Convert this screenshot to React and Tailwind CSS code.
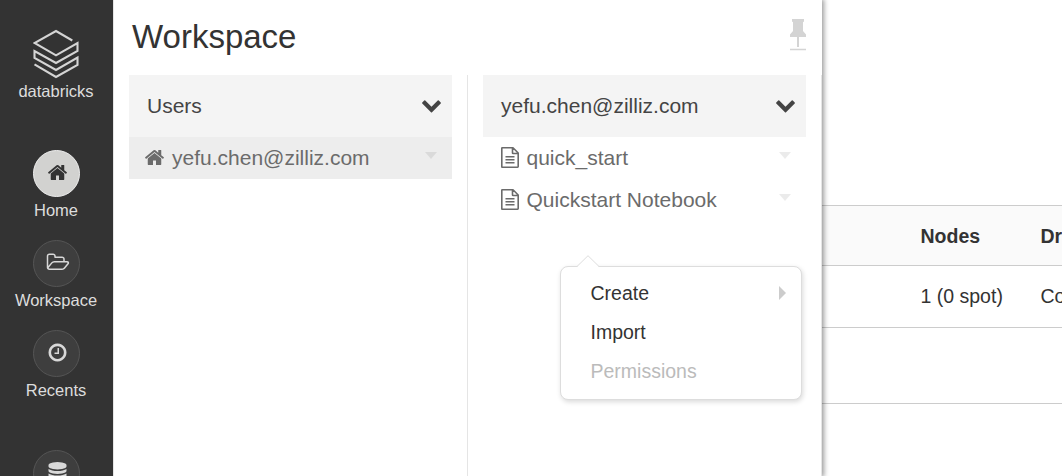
const HOME = "M1472 992v480q0 26-19 45t-45 19h-384v-384h-256v384h-384q-26 0-45-19t-19-45v-480q0-1 .5-3t.5-3l575-474 575 474q1 2 1 6zm223-69l-62 74q-8 9-21 11h-3q-13 0-21-7l-692-577-692 577q-12 8-24 7-13-2-21-11l-62-74q-8-10-7-23.5t11-21.5l719-599q32-26 76-26t76 26l244 204v-195q0-14 9-23t23-9h192q14 0 23 9t9 23v408l219 182q10 8 11 21.5t-7 23.5z";
const FOLDER = "M1845 931q0-35-53-35h-1088q-40 0-85.5 21.5t-71.5 52.5l-294 363q-18 24-18 40 0 35 53 35h1088q40 0 86-22t71-53l294-363q18-22 18-39zm-1141-163h768v-160q0-40-28-68t-68-28h-576q-40 0-68-28t-28-68v-64q0-40-28-68t-68-28h-320q-40 0-68 28t-28 68v853l256-315q44-53 116-87.5t140-34.5zm1269 163q0 62-46 120l-295 363q-43 53-116 87.5t-140 34.5h-1088q-92 0-158-66t-66-158v-960q0-92 66-158t158-66h320q92 0 158 66t66 158v32h544q92 0 158 66t66 158v160h192q54 0 99 24.5t67 70.5q15 32 15 68z";
const CLOCK = "M1024 544v448q0 14-9 23t-23 9h-320q-14 0-23-9t-9-23v-64q0-14 9-23t23-9h224v-352q0-14 9-23t23-9h64q14 0 23 9t9 23zm416 352q0-148-73-273t-198-198-273-73-273 73-198 198-73 273 73 273 198 198 273 73 273-73 198-198 73-273zm224 0q0 209-103 385.5t-279.5 279.5-385.5 103-385.5-103-279.5-279.5-103-385.5 103-385.5 279.5-279.5 385.5-103 385.5 103 279.5 279.5 103 385.5z";
const DATABASE = "M896 768q237 0 443-43t325-127v170q0 69-103 128t-280 93.5-385 34.5-385-34.5-280-93.5-103-128v-170q119 84 325 127t443 43zm0 768q237 0 443-43t325-127v170q0 69-103 128t-280 93.5-385 34.5-385-34.5-280-93.5-103-128v-170q119 84 325 127t443 43zm0-384q237 0 443-43t325-127v170q0 69-103 128t-280 93.5-385 34.5-385-34.5-280-93.5-103-128v-170q119 84 325 127t443 43zm0-1152q208 0 385 34.5t280 93.5 103 128v128q0 69-103 128t-280 93.5-385 34.5-385-34.5-280-93.5-103-128v-128q0-69 103-128t280-93.5 385-34.5z";
const CHEVRON = "M1683 808l-742 741q-19 19-45 19t-45-19l-742-741q-19-19-19-45.5t19-45.5l166-165q19-19 45-19t45 19l531 531 531-531q19-19 45-19t45 19l166 165q19 19 19 45.5t-19 45.5z";

function Glyph({ d, width = 1792, className }) {
  return (
    <svg viewBox={`0 0 ${width} 1792`} fill="currentColor" className={className}>
      <path d={d} />
    </svg>
  );
}

function DocIcon() {
  return (
    <svg viewBox="0 0 18 21" fill="none" stroke="currentColor" strokeWidth="1.6" strokeLinejoin="round" className="mr-2 mb-[2px] h-[21px] w-[18px]">
      <path d="M1.2.8H12l5.2 5.2V19.6q0 .6-.6.6H1.2q-.4 0-.4-.6V1.2q0-.4.4-.4zM11.5.8v5.1q0 .6.6.6h5.1M4.5 9.700h9M4.5 12.700h9M4.5 15.700h9" />
    </svg>
  );
}

function Caret() {
  return (
    <svg viewBox="0 0 12 7" className="mb-[6px] h-[7px] w-3 text-black/8" fill="currentColor">
      <path d="M0 0h12L6 7z" />
    </svg>
  );
}

function NavItem({ label, active, children, className = "" }) {
  return (
    <div className={`flex h-[90px] shrink-0 flex-col items-center ${className}`}>
      <div className={`flex h-[47px] w-[47px] shrink-0 items-center justify-center rounded-full border pb-[2px] ${active ? "border-[#eeeeee] bg-[#d2d2d0] text-[#333333]" : "border-[#555555] bg-[#3e3e3e] text-[#d8d8d8]"}`}>
        {children}
      </div>
      {label && <div className="mt-[3px] mr-[1px] text-[16.5px] leading-5">{label}</div>}
    </div>
  );
}

function ColumnHeader({ children }) {
  return (
    <div className="flex h-[62px] items-center justify-between bg-[#f4f4f4] pr-[10px] pl-[18px] text-[21px] text-[#444444]">
      <span>{children}</span>
      <Glyph d={CHEVRON} className="mb-[3px] h-[21px] w-[21px]" />
    </div>
  );
}

function Row({ icon, children, className = "" }) {
  return (
    <div className={`flex h-[42px] items-center pr-[15px] text-[21px] text-[#6b6b6b] ${className}`}>
      {icon}
      <span className="flex-1">{children}</span>
      <Caret />
    </div>
  );
}

export default function App() {
  return (
    <div className="flex h-[476px] w-[1062px] overflow-hidden bg-white font-['Liberation_Sans',Arial,sans-serif]">
      <nav className="z-20 flex w-[113px] shrink-0 flex-col overflow-hidden bg-[#333333] text-[#dddddd]">
        <div className="flex h-[150px] shrink-0 flex-col items-center pt-[29px]">
          <svg viewBox="0 0 46 50" className="mr-[1px] h-[50px] w-[46px]" fill="none" stroke="#d4d4d4" strokeWidth="2.1">
            <path d="M39.300 11.500 23 2 1.500 14 23 26.300 44.500 14v8L23 34 1.500 22v7L23 41 44.500 28.500V36L23 48 1.500 35.300" />
          </svg>
          <div className="mt-[2px] mr-[1px] text-[16.5px] leading-5">databricks</div>
        </div>
        <NavItem label="Home" active>
          <Glyph d={HOME} className="ml-[2px] h-[21px] w-[21px]" />
        </NavItem>
        <NavItem label="Workspace">
          <Glyph d={FOLDER} width={2048} className="ml-[2px] h-[21px] w-6" />
        </NavItem>
        <NavItem label="Recents">
          <Glyph d={CLOCK} className="ml-[2px] h-[21px] w-[21px]" />
        </NavItem>
        <NavItem className="mt-[30px]">
          <Glyph d={DATABASE} className="ml-[2px] h-[21px] w-[21px]" />
        </NavItem>
      </nav>

      <main className="relative z-10 flex w-[709px] shrink-0 flex-col border-l border-[#e5e5e5] bg-white shadow-[1px_0_5px_1px_rgba(0,0,0,0.4)]">
        <header className="flex h-[75px] shrink-0 items-start justify-between pr-4 pl-[18px]">
          <h1 className="mt-[17px] text-[33px] leading-10 text-[#333333]">Workspace</h1>
          <svg viewBox="0 0 16 32" className="mt-[19px] h-8 w-4" fill="#d4d4d4">
            <path d="M2 0h12v2.500l-1 .8V12l3 3.500V18H9v10H7V18H0v-2.500L3 12V3.300l-1-.8zM0 29.800h16v1.400H0z" />
          </svg>
        </header>
        <div className="flex flex-1">
          <section className="w-[354px] border-r border-[#e5e5e5] pr-[15px] pl-[15px]">
            <ColumnHeader>Users</ColumnHeader>
            <Row className="bg-[#ededed] pl-[15px]" icon={<Glyph d={HOME} className="mr-[7px] mb-[2px] h-[21px] w-[21px]" />}>yefu.chen@zilliz.com</Row>
          </section>
          <section className="w-[354px] border-r border-[#e5e5e5] pr-[15px] pl-[15px]">
            <ColumnHeader>yefu.chen@zilliz.com</ColumnHeader>
            <Row className="pl-[17.5px]" icon={<DocIcon />}>quick_start</Row>
            <Row className="pl-[17.5px]" icon={<DocIcon />}>Quickstart Notebook</Row>
          </section>
        </div>

        <div className="absolute top-[266px] left-[446px] h-[134px] w-[242px] rounded-[8px] border border-[#dddddd] bg-white pt-[7px] pl-[29.5px] text-[19.5px] leading-[39px] text-[#333333] shadow-[1px_2px_5px_rgba(0,0,0,0.15)]">
          <svg viewBox="0 0 24 12" className="absolute -top-[12px] left-[15px] h-3 w-6">
            <path d="M1 12 12 1l11 11z" fill="white" />
            <path d="M1 11.500 12 .7l11 10.800" fill="none" stroke="#dddddd" />
          </svg>
          <div className="flex items-center justify-between pr-[15px]">
            <span>Create</span>
            <svg viewBox="0 0 7 14" className="mb-[1px] h-[14px] w-[7px]" fill="#cccccc"><path d="M0 0l7 7-7 7z" /></svg>
          </div>
          <div>Import</div>
          <div className="text-[#bbbbbb]">Permissions</div>
        </div>
      </main>

      <div className="min-w-0 flex-1 overflow-hidden pt-[205px] text-[19.5px] whitespace-nowrap text-[#333333]">
        <div className="flex h-[61px] items-center border-y border-[#cccccc] bg-[#fafafa] pt-[2px] pl-[98.5px] font-bold">
          <div className="w-[120px] shrink-0">Nodes</div>
          <div>Dr</div>
        </div>
        <div className="flex h-[62px] items-center border-b border-[#cccccc] pl-[98.5px]">
          <div className="w-[120px] shrink-0">1 (0 spot)</div>
          <div>Co</div>
        </div>
        <div className="h-[76px] border-b border-[#cccccc]" />
      </div>
    </div>
  );
}
